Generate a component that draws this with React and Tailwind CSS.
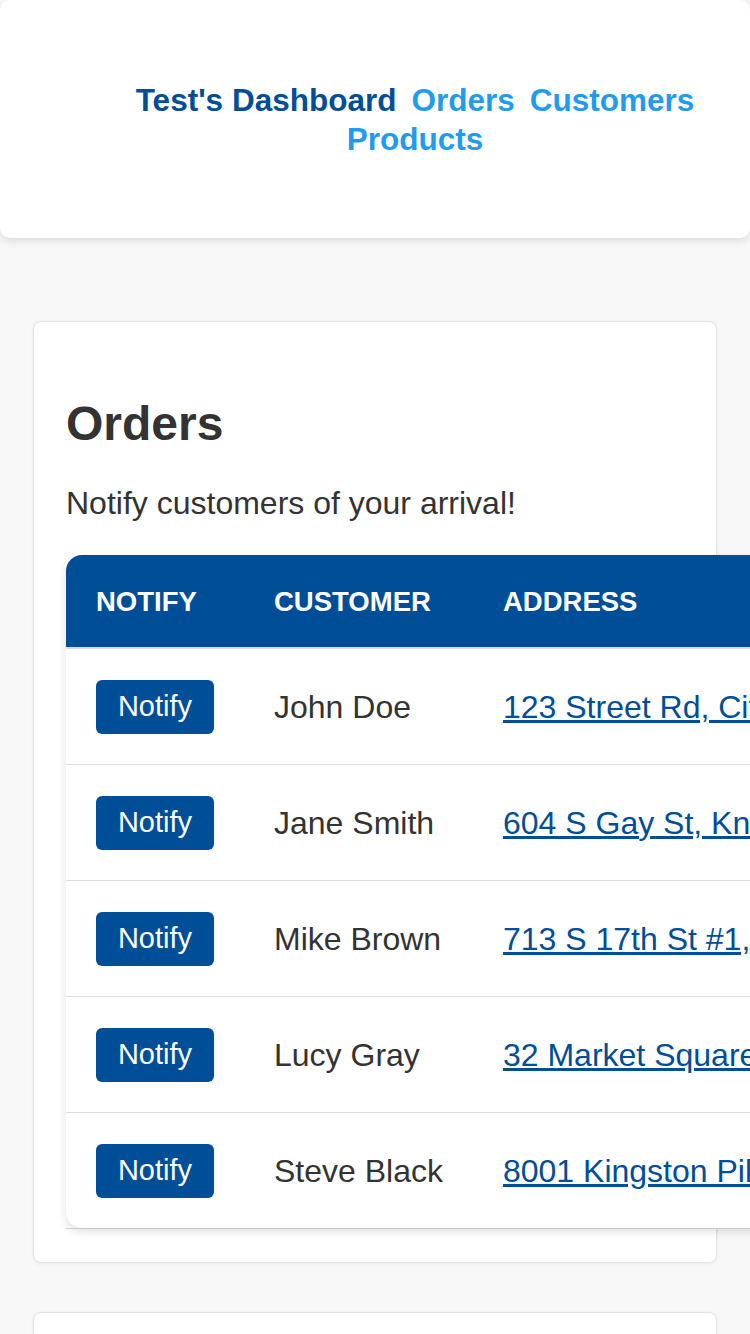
import React from 'react';

const orders = [
  { id: 1, name: 'John Doe', address: '123 Street Rd, City, ST 12345' },
  { id: 2, name: 'Jane Smith', address: '604 S Gay St, Knoxville, TN 37902' },
  { id: 3, name: 'Mike Brown', address: '713 S 17th St #1, Knoxville, TN 37916' },
  { id: 4, name: 'Lucy Gray', address: '32 Market Square, Knoxville, TN 37902' },
  { id: 5, name: 'Steve Black', address: '8001 Kingston Pike, Knoxville, TN 37919' },
];

export default function App() {
  return (
    <div className="min-h-screen overflow-hidden bg-[#f8f8f8] pb-16 font-[family-name:'Liberation_Sans',Arial,sans-serif] text-[#333]">
      {/* top nav */}
      <header className="flex h-[238px] items-center justify-center rounded-[10px] bg-white pl-[80px] pt-[2px] shadow-[0_3px_10px_rgba(0,0,0,0.12)]">
        <nav className="flex flex-wrap justify-center gap-x-[15px] text-[31.5px] font-bold leading-[39px]">
          <a className="text-[#004e98]">Test's Dashboard</a>
          <a className="text-[#1f9bef]">Orders</a>
          <a className="text-[#1f9bef]">Customers</a>
          <a className="text-[#1f9bef]">Products</a>
        </nav>
      </header>

      {/* orders card */}
      <section className="mx-[33px] mt-[83px] rounded-[8px] border border-[#e2e2e2] bg-white px-[32px] pb-[33px] pt-[74px] shadow-[0_1px_4px_rgba(0,0,0,0.06)]">
        <h2 className="text-[48px] font-bold leading-[55px]">Orders</h2>
        <p className="mt-[34px] text-[32px] leading-[37px]">Notify customers of your arrival!</p>

        <div className="mt-[33px] w-max border-b border-[#dcdcdc]">
          <div className="grid grid-cols-[auto_auto_auto] overflow-hidden rounded-l-[16px] bg-white shadow-[0_4px_10px_rgba(0,0,0,0.12)]">
            {['Notify', 'Customer', 'Address'].map((h) => (
              <div
                key={h}
                className="flex h-[94px] items-center border-b-2 border-[#dcdcdc] bg-[#004e98] px-[30px] pt-[2px] text-[27.5px] font-bold uppercase text-white"
              >
                {h}
              </div>
            ))}
            {orders.map((o, i) => {
              const cell =
                'flex items-center px-[30px] ' +
                (i === orders.length - 1 ? 'h-[115px]' : 'h-[116px] border-b border-[#dcdcdc]');
              return (
                <React.Fragment key={o.id}>
                  <div className={cell}>
                    <button className="h-[54px] w-[118px] rounded-[6px] bg-[#004e98] text-[29px] text-white">
                      Notify
                    </button>
                  </div>
                  <div className={cell + ' whitespace-nowrap text-[32px]'}>{o.name}</div>
                  <div className={cell + ' whitespace-nowrap text-[32px]'}>
                    <a className="text-[#004e98] underline">{o.address}</a>
                  </div>
                </React.Fragment>
              );
            })}
          </div>
        </div>
      </section>

      {/* next card */}
      <section className="mx-[33px] mt-[49px] h-[300px] rounded-[8px] border border-[#e2e2e2] bg-white px-[32px] pt-[74px] shadow-[0_1px_4px_rgba(0,0,0,0.06)]">
        <h2 className="text-[48px] font-bold leading-[55px]">Customers</h2>
      </section>
    </div>
  );
}
